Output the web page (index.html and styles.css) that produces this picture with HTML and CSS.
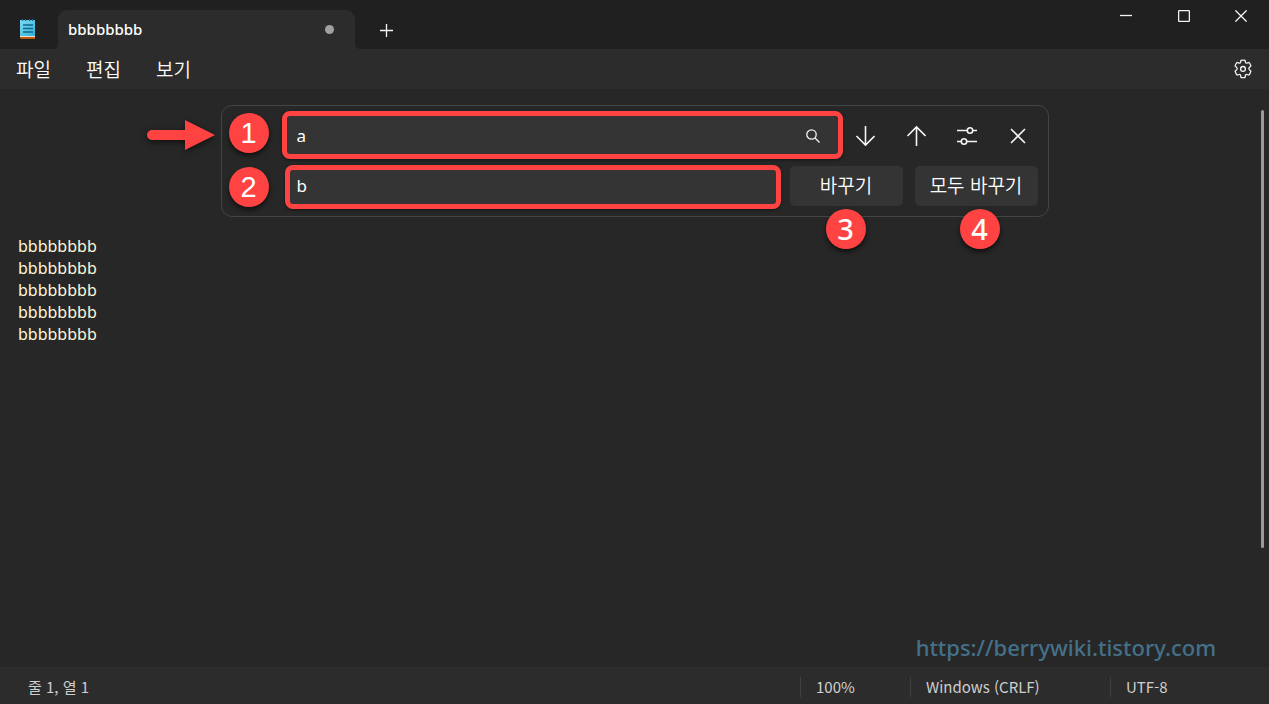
FILE: index.html
```html
<!DOCTYPE html>
<html lang="ko">
<head>
<meta charset="utf-8">
<title>bbbbbbbb</title>
<link rel="stylesheet" href="styles.css">
</head>
<body>
<div class="window">
  <header class="titlebar">
    <svg class="app-icon" width="15" height="20" viewBox="0 0 15 20" aria-hidden="true">
      <defs><linearGradient id="page" x1="0" y1="0" x2="1" y2="1"><stop offset="0" stop-color="#7fdcf5"/><stop offset="1" stop-color="#35aed4"/></linearGradient></defs>
      <path d="M0 16h15v4H1l-1-1z" fill="#b85a0c"/>
      <path d="M0 16h15v2H0z" fill="#ece4dc"/>
      <path d="M0 1h15v16H0z" fill="url(#page)"/>
      <path d="M2.500 0v2M5.500 0v2M9.500 0v2M12.500 0v2" stroke="#17688a" stroke-width="1.300"/>
      <path d="M3 6h10M3 9.500h10M3 13h10" stroke="#0b6a91" stroke-width="1.700"/>
    </svg>
    <div class="tab">
      <span class="tab-title">bbbbbbbb</span>
      <span class="unsaved"></span>
    </div>
    <button class="new-tab" aria-label="새 탭"><svg width="14" height="14" viewBox="0 0 14 14"><path d="M7.500 1v13M1 7.500h13"/></svg></button>
    <div class="window-controls">
      <button aria-label="최소화"><svg width="12" height="12" viewBox="0 0 12 12"><path d="M0 5.500h12"/></svg></button>
      <button aria-label="최대화"><svg width="12" height="12" viewBox="0 0 12 12"><rect x=".6" y=".6" width="10.800" height="10.800" rx="1"/></svg></button>
      <button aria-label="닫기"><svg width="12" height="12" viewBox="0 0 12 12"><path d="M.4.4l11.200 11.200M11.600.4L.4 11.600"/></svg></button>
    </div>
  </header>
  <nav class="menubar">
    <button>파일</button>
    <button>편집</button>
    <button>보기</button>
    <button class="settings" aria-label="설정"><svg width="20" height="20" viewBox="0 0 20 20"><path d="M8 1.300Q10 .9 12 1.300L12.500 3.500Q12.800 4.400 13.800 4.100L15.900 3.400Q17.300 4.900 17.900 6.900L16.300 8.400Q15.300 9.200 16.300 10.600L17.900 12.200Q17.300 14.500 15.900 16.100L13.800 15.500Q12.800 15.200 12.500 16.200L12 18.500Q10 18.900 8 18.500L7.500 16.200Q7.200 15.200 6.200 15.500L4.100 16.100Q2.700 14.500 2.100 12.200L3.700 10.600Q4.700 9.200 3.700 8.400L2.100 6.900Q2.700 4.900 4.100 3.400L6.200 4.100Q7.200 4.400 7.500 3.500Z"/><circle cx="10" cy="9.900" r="2.400"/></svg></button>
  </nav>
  <main class="editor">
    <form class="find-panel">
      <svg class="pointer" width="68" height="32" viewBox="0 0 68 32" aria-hidden="true"><path d="M5 11h33V1l30 15-30 15V21H5a5 5 0 0 1 0-10z" fill="#ff4343"/></svg>
      <span class="badge badge-1">1</span>
      <span class="badge badge-2">2</span>
      <div class="find-row">
        <div class="field field-find">
          <input type="text" aria-label="찾기" value="a">
          <svg class="search" width="14" height="14" viewBox="0 0 14 14"><circle cx="5.500" cy="5.500" r="4.700"/><path d="M9 9l4.500 4.500"/></svg>
        </div>
        <div class="find-tools">
          <button type="button" aria-label="다음 찾기"><svg width="20" height="22" viewBox="0 0 20 22"><path d="M10.500 1v19M1.500 11l9 9 9-9"/></svg></button>
          <button type="button" aria-label="이전 찾기"><svg width="20" height="22" viewBox="0 0 20 22"><path d="M10.500 21V2M1.500 11l9-9 9 9"/></svg></button>
          <button type="button" aria-label="옵션"><svg width="20" height="18" viewBox="0 0 20 18"><path d="M0 3.500h10M16 3.500h4M0 14.500h4M10 14.500h10"/><circle cx="13" cy="3.500" r="2.700"/><circle cx="7" cy="14.500" r="2.700"/></svg></button>
          <button type="button" aria-label="찾기 닫기"><svg width="16" height="16" viewBox="0 0 16 16"><path d="M1 1l14 14M15 1L1 15"/></svg></button>
        </div>
      </div>
      <div class="replace-row">
        <div class="field field-replace"><input type="text" aria-label="바꾸기" value="b"></div>
        <div class="action"><button type="button" class="replace">바꾸기</button><span class="badge badge-below">3</span></div>
        <div class="action"><button type="button" class="replace-all">모두 바꾸기</button><span class="badge badge-below">4</span></div>
      </div>
    </form>
    <textarea class="document" aria-label="텍스트 편집기" spellcheck="false">bbbbbbbb
bbbbbbbb
bbbbbbbb
bbbbbbbb
bbbbbbbb</textarea>
    <span class="scrollbar"></span>
    <span class="watermark">https://berrywiki.tistory.com</span>
  </main>
  <footer class="statusbar">
    <span class="position">줄 1, 열 1</span>
    <span class="cell zoom">100%</span>
    <span class="cell line-ending">Windows (CRLF)</span>
    <span class="cell encoding">UTF-8</span>
  </footer>
</div>
</body>
</html>
```
FILE: styles.css
```css
* { box-sizing: border-box; }
body {
  margin: 0;
  background: #272727;
  color: #fff;
  font-family: "Noto Sans", "Noto Sans CJK KR", sans-serif;
}
button {
  padding: 0;
  border: 0;
  background: none;
  color: inherit;
  font: inherit;
}
svg { display: block; }
button svg, .search {
  fill: none;
  stroke: #f4f4f4;
  stroke-width: 1.3;
}
.window {
  display: flex;
  flex-direction: column;
  min-height: 100vh;
}
.titlebar {
  display: flex;
  align-items: flex-end;
  height: 49px;
  padding-left: 20px;
  background: #202020;
}
.app-icon { margin-bottom: 10px; }
.tab {
  position: relative;
  display: flex;
  align-items: center;
  justify-content: space-between;
  width: 297px;
  height: 39px;
  margin-left: 23px;
  padding: 0 21px 0 10px;
  border-radius: 9px 9px 0 0;
  background: #2c2c2c;
}
.tab::before, .tab::after {
  content: "";
  position: absolute;
  bottom: 0;
  width: 5px;
  height: 5px;
}
.tab::before {
  right: 100%;
  background: radial-gradient(circle at 0 0, #202020 5px, #2c2c2c 5px);
}
.tab::after {
  left: 100%;
  background: radial-gradient(circle at 100% 0, #202020 5px, #2c2c2c 5px);
}
.tab-title {
  font-size: 15px;
  font-weight: 500;
  line-height: 20px;
  padding-bottom: 1px;
}
.unsaved {
  width: 9px;
  height: 9px;
  border-radius: 50%;
  background: #a0a0a0;
}
.new-tab { padding: 12px 24px; }
.window-controls {
  display: flex;
  align-self: flex-start;
  margin-left: auto;
}
.window-controls button {
  display: grid;
  place-items: center;
  width: 58px;
  height: 32px;
}
.window-controls button:last-child { width: 56px; }
.menubar {
  display: flex;
  align-items: center;
  gap: 35px;
  height: 40px;
  padding: 0 16px;
  background: #2c2c2c;
  font-family: "Noto Sans CJK KR", sans-serif;
  font-size: 19px;
  font-weight: 350;
}
.menubar button { padding-bottom: 2px; }
.menubar .settings { margin-left: auto; padding: 0; }
.editor {
  position: relative;
  display: flex;
  flex: 1;
  flex-direction: column;
  padding: 16px 18px 0;
}
.find-panel {
  position: relative;
  display: grid;
  gap: 10px;
  width: 100%;
  max-width: 828px;
  margin: 0 auto;
  padding: 10px 10px 10px 63px;
  border: 1px solid #444;
  border-radius: 11px;
}
.find-row { display: flex; gap: 7px; }
.replace-row { display: flex; gap: 12px; }
.field { position: relative; flex: 1; }
.field::after {
  content: "";
  position: absolute;
  border: 5px solid #ff4343;
  border-radius: 8px;
  box-shadow: 0 1px 3px #0008;
  pointer-events: none;
}
.field-find::after { inset: -5px -5px -3px -3px; }
.field-replace::after { inset: -1px -3px -3px 0; }
.field input {
  display: block;
  width: 100%;
  height: 40px;
  padding: 0 12px 2px;
  border: 0;
  border-radius: 5px;
  background: #343434;
  color: #fff;
  font-family: "Noto Sans", sans-serif;
  font-size: 17px;
}
.search { position: absolute; top: 13px; right: 18px; }
.find-tools { display: flex; gap: 11px; }
.find-tools button {
  display: grid;
  place-items: center;
  width: 40px;
  height: 40px;
}
.find-tools svg { stroke-width: 1.6; }
.action { position: relative; }
.action button {
  height: 40px;
  padding-bottom: 3px;
  border-radius: 5px;
  background: #343434;
  font-family: "Noto Sans CJK KR", sans-serif;
  font-size: 19px;
  font-weight: 350;
}
.replace { width: 113px; }
.replace-all { width: 123px; }
.badge {
  position: absolute;
  display: grid;
  place-items: center;
  width: 40px;
  height: 40px;
  border-radius: 50%;
  background: #ff4343;
  box-shadow: 0 3px 5px #0009;
  font-family: "Liberation Sans", sans-serif;
  font-size: 29px;
  line-height: 40px;
}
.badge-1 { top: 7px; left: 7px; }
.badge-2 { top: 61px; left: 7px; }
.badge-below {
  top: 43px;
  left: 36px;
  font-family: "Noto Sans", sans-serif;
  font-weight: 500;
}
.action:last-child .badge { left: 45px; }
.pointer {
  position: absolute;
  top: 13px;
  right: 100%;
  margin-right: 7px;
  filter: drop-shadow(0 2px 3px #0009);
}
.document {
  flex: 1;
  margin: 18px 0 0;
  padding: 0;
  border: 0;
  outline: 0;
  resize: none;
  background: none;
  color: #fff8d8;
  font-family: "Noto Sans", sans-serif;
  font-size: 16px;
  line-height: 22px;
}
.scrollbar {
  position: absolute;
  top: 21px;
  right: 5px;
  width: 3px;
  height: 438px;
  border-radius: 2px;
  background: #9a9a9a;
}
.watermark {
  position: absolute;
  right: 53px;
  bottom: 4px;
  color: #447189;
  font-family: "Noto Sans", sans-serif;
  font-size: 22px;
  font-weight: 500;
  line-height: 32px;
}
.statusbar {
  display: flex;
  align-items: center;
  height: 37px;
  padding-top: 3px;
  padding-left: 28px;
  background: #2c2c2c;
  color: #cfcfcf;
  font-family: "Noto Sans CJK KR", sans-serif;
  font-size: 15px;
  line-height: 20px;
}
.position { flex: 1; }
.cell {
  padding-left: 15px;
  border-left: 1px solid #404040;
}
.zoom { width: 110px; }
.line-ending { width: 200px; }
.encoding { width: 159px; }
```
